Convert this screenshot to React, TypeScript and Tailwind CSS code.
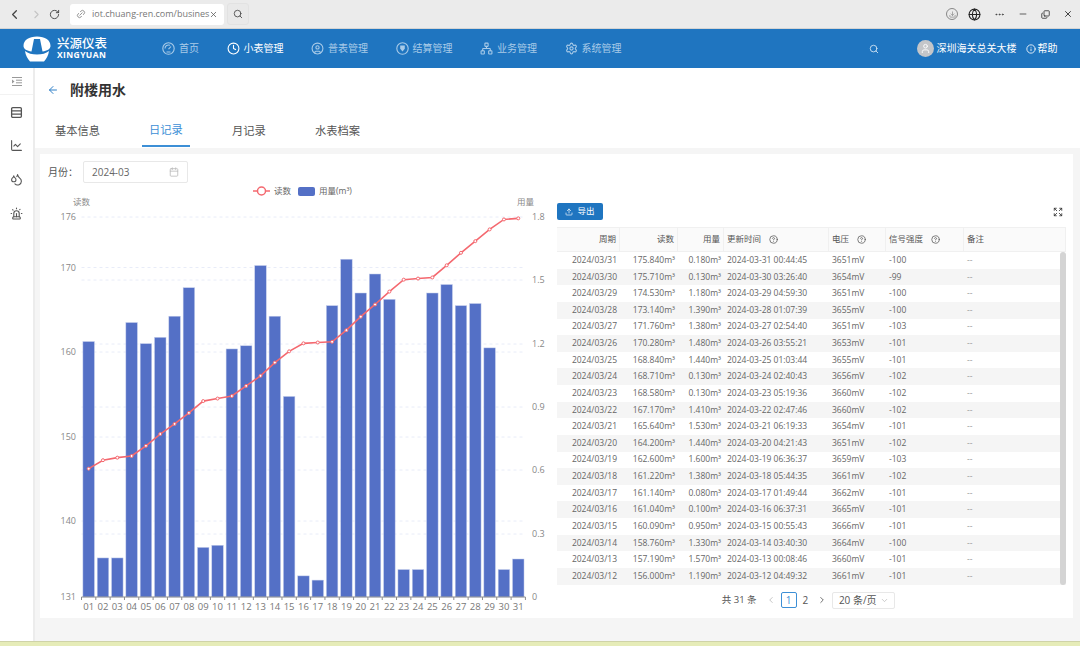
import { ArrowLeft, Calendar, ChevronDown, ChevronLeft, ChevronRight, CircleHelp, Copy, Download, Ellipsis, Expand, Globe, Info, Link2, Minus, RotateCw, Search, Settings, Network, Clock, CircleUser, X, Droplets, Siren, ChartLine, Rows3, Upload, User } from 'lucide-react'

const font = "font-['Open_Sans','Noto_Sans_CJK_SC',sans-serif]"

const rows = [
  ['2024/03/31', '175.840', '0.180', '2024-03-31 00:44:45', '3651mV', '-100'],
  ['2024/03/30', '175.710', '0.130', '2024-03-30 03:26:40', '3654mV', '-99'],
  ['2024/03/29', '174.530', '1.180', '2024-03-29 04:59:30', '3651mV', '-100'],
  ['2024/03/28', '173.140', '1.390', '2024-03-28 01:07:39', '3655mV', '-100'],
  ['2024/03/27', '171.760', '1.380', '2024-03-27 02:54:40', '3651mV', '-103'],
  ['2024/03/26', '170.280', '1.480', '2024-03-26 03:55:21', '3653mV', '-101'],
  ['2024/03/25', '168.840', '1.440', '2024-03-25 01:03:44', '3655mV', '-101'],
  ['2024/03/24', '168.710', '0.130', '2024-03-24 02:40:43', '3656mV', '-102'],
  ['2024/03/23', '168.580', '0.130', '2024-03-23 05:19:36', '3660mV', '-102'],
  ['2024/03/22', '167.170', '1.410', '2024-03-22 02:47:46', '3660mV', '-102'],
  ['2024/03/21', '165.640', '1.530', '2024-03-21 06:19:33', '3654mV', '-101'],
  ['2024/03/20', '164.200', '1.440', '2024-03-20 04:21:43', '3651mV', '-102'],
  ['2024/03/19', '162.600', '1.600', '2024-03-19 06:36:37', '3659mV', '-103'],
  ['2024/03/18', '161.220', '1.380', '2024-03-18 05:44:35', '3661mV', '-102'],
  ['2024/03/17', '161.140', '0.080', '2024-03-17 01:49:44', '3662mV', '-101'],
  ['2024/03/16', '161.040', '0.100', '2024-03-16 06:37:31', '3665mV', '-101'],
  ['2024/03/15', '160.090', '0.950', '2024-03-15 00:55:43', '3666mV', '-101'],
  ['2024/03/14', '158.760', '1.330', '2024-03-14 03:40:30', '3664mV', '-100'],
  ['2024/03/13', '157.190', '1.570', '2024-03-13 00:08:46', '3660mV', '-101'],
  ['2024/03/12', '156.000', '1.190', '2024-03-12 04:49:32', '3661mV', '-101'],
]

const usage = [1.21, 0.185, 0.185, 1.3, 1.2, 1.23, 1.33, 1.465, 0.235, 0.245, 1.175, 1.19, 1.57, 1.33, 0.95, 0.1, 0.08, 1.38, 1.6, 1.44, 1.53, 1.41, 0.13, 0.13, 1.44, 1.48, 1.38, 1.39, 1.18, 0.13, 0.18]
const readings = [146.2, 147.2, 147.5, 147.7, 148.9, 150.3, 151.5, 152.8, 154.2, 154.5, 154.8, 156, 157.19, 158.76, 160.09, 161.04, 161.14, 161.22, 162.6, 164.2, 165.64, 167.17, 168.58, 168.71, 168.84, 170.28, 171.76, 173.14, 174.53, 175.71, 175.84]

const x0 = 81.5
const band = 14.32
const axisY = 597
const px = (i: number) => x0 + band * i + band / 2
const usageY = (v: number) => axisY - (v / 1.8) * 380
const readY = (v: number) => axisY - ((v - 131) / 45) * 380

// the two nav glyphs lucide has no close match for
function DialIcon({ className }: { className?: string }) {
  return (
    <svg viewBox="0 0 13 13" className={className} fill="none" stroke="currentColor" strokeWidth="1.1">
      <circle cx="6.5" cy="6.5" r="5.7" />
      <path d="M3 6.500A3.500 3.500 0 0 1 8 3.300M6.500 7.200L9 4.500M4.500 10H8.500" />
    </svg>
  )
}

function CoinIcon({ className }: { className?: string }) {
  return (
    <svg viewBox="0 0 13 13" className={className} fill="none" stroke="currentColor" strokeWidth="1.1">
      <circle cx="6.5" cy="6.5" r="5.7" />
      <path d="M4.200 3.600H8.800V6.800L6.500 9.600L4.200 6.800Z" fill="currentColor" stroke="none" />
    </svg>
  )
}

const navItems = [
  { label: '首页', icon: DialIcon },
  { label: '小表管理', icon: Clock, active: true },
  { label: '普表管理', icon: CircleUser },
  { label: '结算管理', icon: CoinIcon },
  { label: '业务管理', icon: Network },
  { label: '系统管理', icon: Settings },
]

function Chart() {
  const leftTicks = [[176, 217], [170, 267.5], [160, 352], [150, 437], [140, 521], [131, 597]] as const
  const rightTicks = [[1.8, 217], [1.5, 280], [1.2, 344], [0.9, 407], [0.6, 470], [0.3, 534], [0, 597]] as const
  const gridY = [217, 267.5, 280, 344, 352, 407, 437, 470, 521, 534]
  const line = readings.map((v, i) => `${px(i)},${readY(v)}`).join(' ')
  return (
    <svg width="516" height="440" viewBox="40 175 516 440" className="block shrink-0" fontFamily="'Open Sans','Noto Sans CJK SC',sans-serif">
      {/* legend */}
      <line x1="253" x2="270" y1="191" y2="191" stroke="#f4686f" strokeWidth="1.5" />
      <circle cx="261.5" cy="191" r="4" fill="#fff" stroke="#f4686f" strokeWidth="1.5" />
      <text x="274" y="194" fontSize="8.5" fill="#666">读数</text>
      <rect x="298" y="187" width="17" height="9" rx="2" fill="#5470c6" />
      <text x="319" y="194" fontSize="8.5" fill="#666">用量(m³)</text>
      <text x="73" y="205" fontSize="8.5" fill="#8a8a8a">读数</text>
      <text x="517" y="205" fontSize="8.5" fill="#8a8a8a">用量</text>
      {gridY.map((y) => (
        <line key={y} x1={x0} x2={x0 + band * 31} y1={y} y2={y} stroke="#e8ecf8" strokeDasharray="3 3" />
      ))}
      {usage.map((v, i) => (
        <rect key={i} x={px(i) - 5.75} y={usageY(v)} width="11.5" height={axisY - usageY(v)} fill="#5470c6" stroke="#c3cdec" strokeWidth="0.5" />
      ))}
      <line x1={x0} x2={x0 + band * 31} y1={axisY} y2={axisY} stroke="#8c8c8c" />
      {usage.map((_, i) => (
        <line key={i} x1={x0 + band * i} x2={x0 + band * i} y1={axisY} y2={axisY + 3} stroke="#8c8c8c" />
      ))}
      <line x1={x0 + band * 31} x2={x0 + band * 31} y1={axisY} y2={axisY + 3} stroke="#8c8c8c" />
      {usage.map((_, i) => (
        <text key={i} x={px(i)} y="610" textAnchor="middle" fontSize="9.5" fill="#777">{String(i + 1).padStart(2, '0')}</text>
      ))}
      {leftTicks.map(([v, y]) => (
        <text key={v} x="76" y={y + 3} textAnchor="end" fontSize="9" fill="#888">{v}</text>
      ))}
      {rightTicks.map(([v, y]) => (
        <text key={v} x="532" y={y + 3} fontSize="9" fill="#888">{v === 0 ? '0' : v.toFixed(1)}</text>
      ))}
      <polyline points={line} fill="none" stroke="#f4686f" strokeWidth="1.6" />
      {readings.map((v, i) => (
        <circle key={i} cx={px(i)} cy={readY(v)} r="1.5" fill="#fff" stroke="#f4686f" strokeWidth="1" />
      ))}
    </svg>
  )
}

function Th({ w, right, help, children }: { w: string; right?: boolean; help?: boolean; children: string }) {
  return (
    <div className={`${w} flex h-full items-center gap-2 border-r border-[#f0f0f0] px-[3px] ${right ? 'justify-end' : ''}`}>
      <span>{children}</span>
      {help && <CircleHelp className="size-[9px] text-[#555]" />}
    </div>
  )
}

export default function App() {
  return (
    <div className={`flex h-[646px] w-[1080px] flex-col overflow-hidden bg-[#f5f5f5] ${font}`}>
      {/* browser chrome */}
      <div className="flex h-[29px] shrink-0 items-center border-b border-[#d4d4d4] bg-[#ebebeb] text-[#444]">
        <ChevronLeft className="ml-[7px] size-[15px]" />
        <ChevronRight className="ml-[8px] size-[13px] text-[#c4c4c4]" />
        <RotateCw className="ml-[6px] size-[11px]" />
        <div className="ml-[10px] flex h-[21px] w-[154px] items-center rounded-[3px] bg-white pl-[6px] pr-[7px] text-[9px] text-[#777]">
          <Link2 className="size-[10px] shrink-0 -rotate-45 text-[#888]" />
          <span className="ml-[6px] whitespace-nowrap">iot.chuang-ren.com/busines</span>
          <X className="ml-auto size-[9px] shrink-0 text-[#555]" />
        </div>
        <div className="ml-[3px] flex size-[22px] items-center justify-center rounded-[3px] border border-[#e2e2e2] bg-[#e9e9e9]">
          <Search className="size-[10px]" />
        </div>
        <div className="ml-auto flex items-center">
          <div className="flex size-[12px] items-center justify-center rounded-full border border-[#888]">
            <Download className="size-[7px] text-[#777]" />
          </div>
          <Globe className="ml-[10px] size-[13px] text-[#222]" />
          <Ellipsis className="ml-[13px] size-[11px]" />
          <Minus className="ml-[13px] size-[10px]" />
          <Copy className="ml-[13px] size-[9px] -scale-y-100 text-[#222]" />
          <X className="ml-[13px] mr-[7px] size-[10px] text-[#222]" />
        </div>
      </div>

      {/* top nav */}
      <div className="flex h-[39px] shrink-0 items-center bg-[#1f75c0] text-[10px] text-[#a9cbe8]">
        <div className="ml-[23px] flex w-[140px] items-center">
          <svg width="28" height="26" viewBox="0 0 28 26">
            <path d="M0.500 10 C0.500 4 6 0.500 14 0.500 C22 0.500 27.500 4 27.500 10 C27.500 13 24 15 19.500 15.500 L17 3 H11 L8.500 15.500 C4 15 0.500 13 0.500 10 Z" fill="#fff" />
            <path d="M2 15 C5 17.500 9 18.500 14 18.500 C19 18.500 23 17.500 26 15 C25.500 19 23.500 23 21 25.500 H7 C4.500 23 2.500 19 2 15 Z" fill="#fff" />
          </svg>
          <div className="ml-[6px] flex flex-col leading-none text-white">
            <span className="text-[12.5px] font-medium leading-[13px]">兴源仪表</span>
            <span className="text-[8.5px] font-bold leading-[10px] tracking-[0.4px]">XINGYUAN</span>
          </div>
        </div>
        <div className="-ml-px flex gap-[27.5px]">
          {navItems.map(({ label, icon: Icon, active }) => (
            <div key={label} className={`flex items-center gap-[4px] ${active ? 'text-white' : ''}`}>
              <Icon className="size-[13px]" />
              <span>{label}</span>
            </div>
          ))}
        </div>
        <Search className="ml-[247px] size-[10px] text-[#dceaf6]" />
        <div className="ml-[38px] flex size-[17px] items-center justify-center rounded-full bg-[#c4c6c9]">
          <User className="size-[11px] text-white" />
        </div>
        <span className="ml-[3px] text-white">深圳海关总关大楼</span>
        <Info className="ml-[9px] size-[10px] text-white" />
        <span className="ml-[2px] text-white">帮助</span>
      </div>

      <div className="flex min-h-0 flex-1">
        {/* side bar */}
        <div className="flex w-[35px] shrink-0 flex-col items-center border-r-2 border-[#ececec] bg-white text-[#555]">
          <div className="flex h-[27px] w-full items-center justify-center border-b border-[#f2f2f2]">
            <svg width="10" height="9" viewBox="0 0 10 9" fill="none" stroke="#999">
              <path d="M0 .5H10M4 3.200H10M4 5.800H10M0 8.500H10" />
              <path d="M0 2.500L2.500 4.500L0 6.500Z" fill="#999" stroke="none" />
            </svg>
          </div>
          <Rows3 className="mt-[11px] size-[13px]" strokeWidth={2.4} />
          <ChartLine className="mt-[20px] size-[13px]" />
          <Droplets className="mt-[21px] size-[13px]" />
          <Siren className="mt-[21px] size-[13px]" />
        </div>

        <div className="flex min-w-0 flex-1 flex-col">
          {/* title and tabs */}
          <div className="h-[80px] shrink-0 bg-white">
            <div className="flex h-[44px] items-center pb-[1px] pl-[12px]">
              <ArrowLeft className="size-[12px] text-[#2f80c8]" />
              <span className="ml-[11px] text-[14px] font-bold text-[#333]">附楼用水</span>
            </div>
            <div className="flex h-[35px] text-[11.25px] text-[#555]">
              <div className="ml-[20px] flex w-[46px] items-center pt-[4px]">基本信息</div>
              <div className="ml-[41px] flex w-[48px] items-center justify-center border-b-2 border-[#3d8fd6] pt-[4px] text-[#3d8fd6]">日记录</div>
              <div className="ml-[42px] flex w-[34px] items-center pt-[4px]">月记录</div>
              <div className="ml-[49px] flex w-[46px] items-center pt-[4px]">水表档案</div>
            </div>
          </div>

          {/* card */}
          <div className="ml-[5px] mr-[7px] mt-[6px] flex h-[464px] shrink-0 flex-col bg-white">
            <div className="flex h-[21px] shrink-0 items-center pl-[8px] pt-[15px] text-[10px] text-[#555]">
              <span>月份：</span>
              <div className="ml-[5px] flex h-[22px] w-[105px] items-center justify-between rounded-[2px] border border-[#e8e8e8] px-[8px] text-[#666]">
                <span>2024-03</span>
                <Calendar className="size-[10px] text-[#bbb]" />
              </div>
            </div>
            <div className="flex min-h-0 flex-1">
              <Chart />
              <div className="ml-[1px] mr-[7px] flex min-w-0 flex-1 flex-col pt-[28px]">
                <div className="flex h-[17px] items-center justify-between">
                  <div className="flex h-[17px] w-[46px] items-center justify-center gap-[4px] rounded-[2px] bg-[#1f75c0] text-[8.5px] text-white">
                    <Upload className="size-[8px]" />
                    <span>导出</span>
                  </div>
                  <Expand className="mr-[3px] size-[10px] text-[#333]" />
                </div>
                <div className="mt-[7px] text-[8.5px] text-[#666]">
                  <div className="flex h-[25px] items-center border-y border-[#f0f0f0] bg-[#fafafa] text-[#555]">
                    <Th w="w-[63px]" right>周期</Th>
                    <Th w="w-[58px]" right>读数</Th>
                    <Th w="w-[46px]" right>用量</Th>
                    <Th w="w-[105px]" help>更新时间</Th>
                    <Th w="w-[57px]" help>电压</Th>
                    <Th w="w-[78px]" help>信号强度</Th>
                    <Th w="w-[102px]">备注</Th>
                  </div>
                  <div className="relative">
                    {rows.map((r, i) => (
                      <div key={r[0]} className={`flex h-[16.63px] items-center ${i % 2 ? 'bg-[#f5f5f5]' : 'bg-white'}`}>
                        <div className="w-[63px] px-[3px] text-right">{r[0]}</div>
                        <div className="w-[58px] px-[3px] text-right">{r[1]}m³</div>
                        <div className="w-[46px] px-[3px] text-right">{r[2]}m³</div>
                        <div className="w-[105px] whitespace-nowrap px-[3px]">{r[3]}</div>
                        <div className="w-[57px] px-[3px]">{r[4]}</div>
                        <div className="w-[78px] px-[3px]">{r[5]}</div>
                        <div className="w-[102px] px-[3px] text-[#999]">--</div>
                      </div>
                    ))}
                    <div className="absolute right-0 top-0 h-full w-[6px] rounded-[3px] bg-[#d4d4d4]" />
                  </div>
                </div>
                <div className="mt-[7px] flex items-center justify-center pr-[6px] text-[10px] text-[#555]">
                  <span className="text-[9.5px]">共 31 条</span>
                  <ChevronLeft className="ml-[9px] size-[10px] text-[#bbb]" />
                  <div className="ml-[5px] flex size-[16px] items-center justify-center rounded-[2px] border border-[#3d8fd6] text-[#3d8fd6]">1</div>
                  <span className="ml-[6px]">2</span>
                  <ChevronRight className="ml-[9px] size-[10px]" />
                  <div className="ml-[5px] flex h-[17px] w-[63px] items-center justify-center gap-[3px] rounded-[2px] border border-[#e8e8e8]">
                    <span>20 条/页</span>
                    <ChevronDown className="size-[9px] text-[#bbb]" />
                  </div>
                </div>
              </div>
            </div>
          </div>
        </div>
      </div>

      {/* desktop peeking under the window */}
      <div className="h-[5px] shrink-0 border-t border-[#cfd3a8] bg-[#e6ecb8]" />
    </div>
  )
}
